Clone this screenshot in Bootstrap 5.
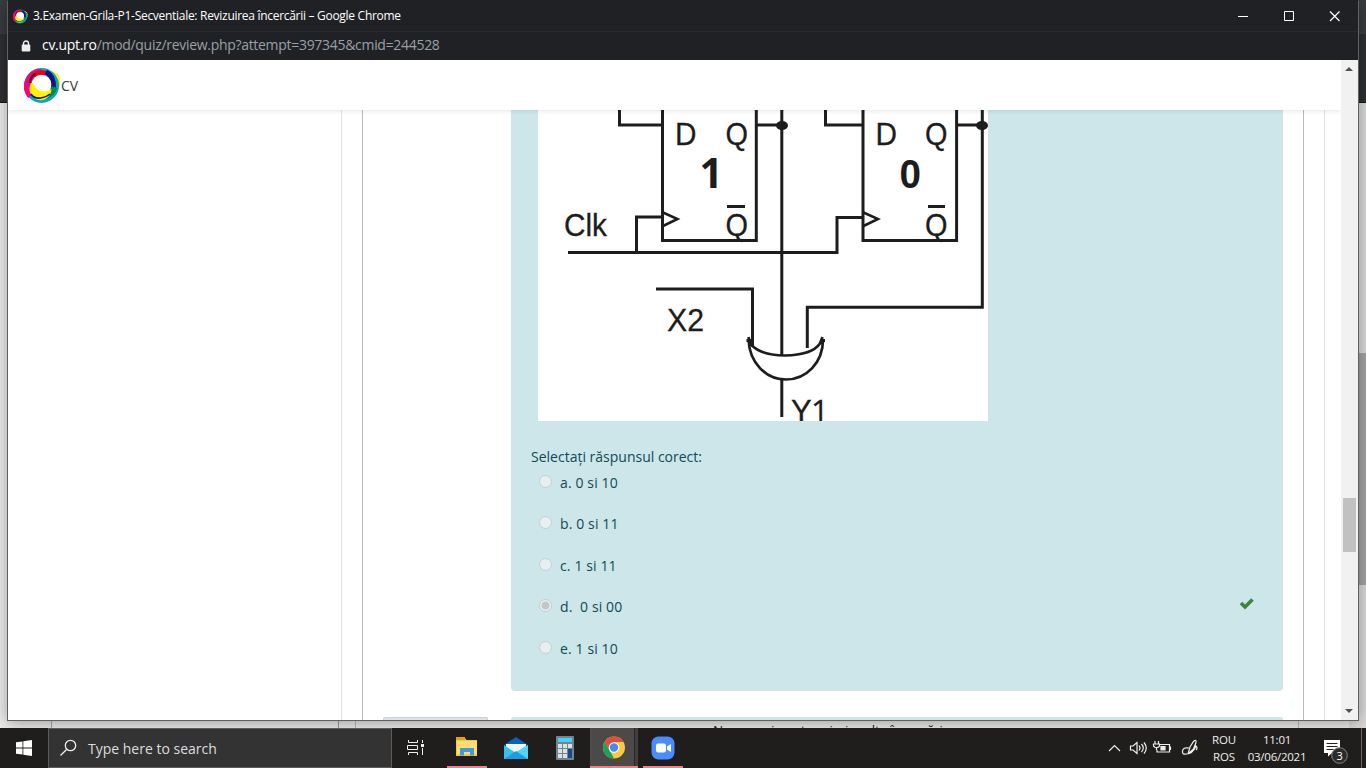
<!DOCTYPE html>
<html lang="ro">
<head>
<meta charset="utf-8">
<meta name="viewport" content="width=device-width, initial-scale=1">
<title>3.Examen-Grila-P1-Secventiale: Revizuirea încercării</title>
<link rel="stylesheet" href="https://cdn.jsdelivr.net/npm/bootstrap@5.3.0/dist/css/bootstrap.min.css">
<style>
html,body{height:768px;overflow:hidden}
body{font-family:"Open Sans","Noto Sans",sans-serif;font-size:14px}
.desktop{width:1366px;height:768px}
.under-bar{height:34px;background:#393d40}
.under-tools{height:69px;background:#2e2f32;border-bottom:1px solid #17181a}
.under-page{background:#eee}
.under-scroll{width:17px;background:#dcdcdc}
.under-thumb{margin-top:250px;height:232px;background:#a5a5a5}
.under-left{width:52px;border-right:1px solid #aaa}
.under-mid{width:287px;border-right:1px solid #999}
.under-gap{width:17px;border-right:1px solid #bbb}
.under-main{width:943px;border-right:1px solid #bbb}
.under-main svg{display:block}
.win{left:7px;top:0;width:1352px;height:721px;border:1px solid #606060;border-top-color:#202124;background:#fff;box-shadow:0 2px 16px rgba(0,0,0,.36)}
.titlebar{height:31px;background:#202124;border-bottom:1px solid #2a2b2e;color:#fff;padding-left:5px}
.title{font-size:12px;letter-spacing:-.29px;margin-left:5px;line-height:30px}
.addr{height:28px;background:#202124;color:#9aa0a6;padding-left:13px}
.url{font-size:14px;line-height:24px;padding-bottom:2px;margin-left:11px;letter-spacing:-.3px}
.site-nav{height:50px;background:#fff;box-shadow:0 2px 4px rgba(0,0,0,.08);padding-left:16px;color:#373a3c;z-index:2}
.side{width:334px;border-right:1px solid #dee2e6}
.region{width:942px;margin-left:20px;border:1px solid #b9b9b9;border-width:0 1px;padding-left:20px}
.tail{margin-left:20px;border-left:1px solid #dee2e6}
.info-spacer,.info-next{width:105px;margin-right:23px}
.next-row{margin-top:26px}
.info-next{height:3px;background:#dee2e6;border:1px solid #cad0d7;border-bottom:0;border-radius:2px 2px 0 0}
.q{width:772px;height:581px;background:#cde6ea;color:#0f4a55;border-radius:0 0 4px 4px;padding-left:20px}
.qnext{width:772px;height:3px;background:#cde6ea;border-radius:3px 3px 0 0}
.circuit{display:block;margin-left:7px}
.prompt{margin-top:25px;height:22px;line-height:22px}
.answers{margin-top:4px}
.ans{height:41.4px;padding-left:8px}
.ans label{line-height:22px;margin-left:8px;white-space:pre;letter-spacing:.12px}
.rad{width:13px;height:13px;margin-top:3px;border:1px solid #c5cdcf;background:#e8eff1;border-radius:50%}
.rad.on{background:radial-gradient(circle,#c3c7c8 0 3.6px,#e8eff1 4.4px)}
.tick{margin-right:28px;margin-top:1px}
.vscroll{width:17px;background:#f1f1f1}
.vthumb{width:13px;height:54px;margin-top:421px;background:#c1c1c1}
.taskbar{height:40px;background:#1f1e1c;color:#eee}
.start{width:48px}
.search{width:344px;height:40px;background:#333;border:1px solid #5c5c5c;color:#ddd;padding-left:10px}
.search span{font-size:14px;margin-left:11px}
.app{height:40px}
.app.run{border-bottom:2px solid #fa7b87}
.tray{font-size:11.5px;line-height:17px;text-align:center;padding-top:3px;white-space:nowrap;letter-spacing:-.1px}
.lang{width:32px;margin-left:3px}
.clock{width:66px;margin-left:4px;letter-spacing:-.25px}
.file-app,.zoom-app{width:40px}
.zoom-app{margin-left:5px}
.chrome-app{width:48px;background:linear-gradient(90deg,#4b4a49 44px,#2a2928 44px 45px,#403f3e 45px)}
</style>
</head>
<body>
<div class="desktop position-relative d-flex flex-column overflow-hidden">
  <div class="under-bar flex-shrink-0"></div>
  <div class="under-tools flex-shrink-0"></div>
  <div class="under-page flex-grow-1 d-flex">
    <div class="under-left"></div><div class="under-mid"></div><div class="under-gap"></div>
    <div class="under-main d-flex flex-column justify-content-end">
      <svg width="942" height="5"><text x="357" y="12" font-size="13.5" fill="#222" textLength="230">Nu se mai poate primi multe încercări</text></svg>
    </div>
    <div class="flex-grow-1"></div>
    <div class="under-scroll"><div class="under-thumb"></div></div>
  </div>

  <div class="win position-absolute d-flex flex-column">
    <div class="titlebar d-flex align-items-center flex-shrink-0">
      <svg width="15" height="15" viewBox="0 0 37 37"><use href="#ring"/></svg>
      <div class="title flex-grow-1">3.Examen-Grila-P1-Secventiale: Revizuirea încercării – Google Chrome</div>
      <svg width="130" height="30" fill="none" stroke="#fff"><path d="M10 15.5h10M56.500 10.500h9v9h-9z"/><path d="M102 10.500l9.500 9.500M111.500 10.500l-9.500 9.500" stroke-width="1.200"/></svg>
    </div>
    <div class="addr d-flex align-items-center flex-shrink-0">
      <svg width="10" height="12"><path d="M2.500 5V3.500a2.500 2.500 0 0 1 5 0V5" fill="none" stroke="#eee" stroke-width="1.400"/><rect x=".7" y="4.500" width="8.600" height="7" rx="1" fill="#eee"/></svg>
      <div class="url"><span class="text-white">cv.upt.ro</span>/mod/quiz/review.php?attempt=397345&amp;cmid=244528</div>
    </div>
    <div class="d-flex flex-grow-1 overflow-hidden">
      <div class="flex-grow-1 d-flex flex-column overflow-hidden">
        <div class="site-nav d-flex align-items-center flex-shrink-0 position-relative">
          <svg width="37" height="37" viewBox="0 0 37 37">
            <g id="ring" fill="none">
              <path d="M26 5q8 1 9 7 1 8-4 13" stroke="#fff200" stroke-width="2"/>
              <circle cx="17.500" cy="18.500" r="13.500" stroke="#06a5c9" stroke-width="8"/>
              <path d="M7 28.500A14 14 0 0 1 17 5.500" stroke="#f0047f" stroke-width="7.500"/>
              <path d="M9 9.500Q14 4.500 22 6.500" stroke="#e8001c" stroke-width="5.500"/>
              <path d="M22 5q8 4 7.500 16" stroke="#17127d" stroke-width="5"/>
              <path d="M30.500 20q-2 7-9 9" stroke="#008c45" stroke-width="6"/>
              <circle cx="17.500" cy="17.500" r="9.800" fill="#fff"/>
              <path d="M7 16a11 11.500 0 1 0 20.500 6q-4 3-9 2.500-7-1-9.500-8.500z" fill="#fff200"/>
              <path d="M7 27q3 5 10 4 5-.5 9-4" stroke="#17127d" stroke-width="1.600"/>
              <path d="M5.500 16Q7 9 11 7" stroke="#4c0710" stroke-width="2"/>
            </g>
          </svg>
          <span>CV</span>
        </div>
        <div class="d-flex flex-grow-1 overflow-hidden">
          <div class="side flex-shrink-0"></div>
          <div class="region flex-shrink-0">
            <div class="d-flex">
              <div class="info-spacer"></div>
              <div class="q">
                <svg class="circuit" width="450" height="311" viewBox="538 110 450 311" font-family="Liberation Sans, sans-serif" font-size="31" fill="#1d1d1d">
                  <rect x="538" y="110" width="450" height="311" fill="#fff"/>
                  <g fill="none" stroke="#1d1d1d" stroke-width="3">
                    <path d="M619.500 110v15H662M756 125h26M825.500 110v15H863M957 125h25"/>
                    <path d="M662.500 108v132.500h93.800V108M863 108v132.500h93.600V108"/>
                    <path d="M568 252.500h269v-35h26M636.500 252v-35H663"/>
                    <path d="M663 212.500l14.500 6.500-14.500 7M863.500 212.500l14.500 6.500-14.500 7" stroke-width="2.500"/>
                    <path d="M727 206.500h18M928 206.500h17"/>
                    <path d="M781.800 110v246M982.300 110v197.200H807.300V348M656 289h96.500v58M781.800 380v37"/>
                    <path d="M748.500 337l1.500 6q8 12 35 12.500 27-.5 35-12l2.500-6.500M748.500 339.500c1 23 17 40 37.500 40s37-17 37-40" stroke-width="2.700"/>
                    <path d="M746.500 340.500h5M820.500 340.500h4.500"/>
                  </g>
                  <ellipse cx="782" cy="125.500" rx="6" ry="4.600"/><ellipse cx="982" cy="125.500" rx="6" ry="4.600"/>
                  <g stroke="#1d1d1d" stroke-width=".3">
                  <text x="675" y="145" textLength="21.500" lengthAdjust="spacingAndGlyphs">D</text><text x="725.500" y="145" textLength="22.500" lengthAdjust="spacingAndGlyphs">Q</text>
                  <text x="875.500" y="145" textLength="21.500" lengthAdjust="spacingAndGlyphs">D</text><text x="925" y="145" textLength="22.500" lengthAdjust="spacingAndGlyphs">Q</text>
                  <text x="725.500" y="235.500" textLength="22.500" lengthAdjust="spacingAndGlyphs">Q</text><text x="925" y="235.500" textLength="22.500" lengthAdjust="spacingAndGlyphs">Q</text>
                  <text x="564" y="235.500" textLength="43" lengthAdjust="spacingAndGlyphs">Clk</text>
                  <text x="667" y="330.500" textLength="37" lengthAdjust="spacingAndGlyphs">X2</text>
                  <text x="791" y="421.500">Y<tspan x="811" font-family="Open Sans">1</tspan></text>
                  </g>
                  <text x="699.500" y="188" font-size="41" font-family="Open Sans" font-weight="700">1</text>
                  <text x="899.500" y="188" font-size="41" font-weight="700" textLength="21.500" lengthAdjust="spacingAndGlyphs">0</text>
                </svg>
                <div class="prompt">Selectați răspunsul corect:</div>
                <div class="answers">
                  <div class="ans d-flex"><i class="rad"></i><label>a. 0 si 10</label></div>
                  <div class="ans d-flex"><i class="rad"></i><label>b. 0 si 11</label></div>
                  <div class="ans d-flex"><i class="rad"></i><label>c. 1 si 11</label></div>
                  <div class="ans d-flex"><i class="rad on"></i><label>d.  0 si 00</label>
                    <svg class="tick ms-auto" width="16" height="13"><path d="M2 6l4 4 7.500-7.500" fill="none" stroke="#3a873c" stroke-width="3.600"/></svg></div>
                  <div class="ans d-flex"><i class="rad"></i><label>e. 1 si 10</label></div>
                </div>
              </div>
            </div>
            <div class="d-flex next-row"><div class="info-next"></div><div class="qnext"></div></div>
          </div>
          <div class="tail flex-grow-1"></div>
        </div>
      </div>
      <div class="vscroll d-flex flex-column align-items-center flex-shrink-0">
        <svg class="mt-1 flex-shrink-0" width="9" height="13"><path d="M0 7l4-4 4 4z" fill="#505050"/></svg>
        <div class="vthumb flex-shrink-0"></div>
        <svg class="mt-auto flex-shrink-0" width="9" height="13"><path d="M0 2l4 4 4-4z" fill="#505050"/></svg>
      </div>
    </div>
  </div>

  <div class="taskbar d-flex flex-shrink-0 position-relative">
    <div class="start d-flex align-items-center justify-content-center"><svg width="16" height="16" fill="#fff"><path d="M0 2.300L6.500 1.400V7.500H0zM7.300 1.200L16 0v7.500H7.300zM0 8.400h6.500v6.200L0 13.700zM7.300 8.400H16V16l-8.700-1.200z"/></svg></div>
    <div class="search d-flex align-items-center"><svg width="18" height="18" fill="none" stroke="#eee" stroke-width="1.300"><circle cx="11.500" cy="6.500" r="5.200"/><path d="M7.800 10.200L1.500 16.500"/></svg><span>Type here to search</span></div>
    <svg class="app" width="55" height="40" fill="none" stroke="#eee"><path d="M16.500 12v2.500h9V12M16.500 27v-2.500h9V27M15.500 17.500h10v4h-10zM30.500 12v3M30.500 20v7"/><path d="M29 17.500h3" stroke-width="3"/></svg>
    <div class="app run file-app d-flex align-items-center justify-content-center">
      <svg width="24" height="22"><path d="M1 2h9l1.500 2H22v16H1z" fill="#f6c64b"/><path d="M1 1h9v3H1z" fill="#e5a00d"/><path d="M2 5h20v13H2z" fill="#ffdc73"/><path d="M5 19.500v-7.500h14v7.500h-4v-3.500H9v3.500z" fill="#3f9bdc"/></svg></div>
    <svg class="app" width="58" height="40"><path d="M17 17l12-8 12 8z" fill="#0b63b5"/><path d="M19 16h20v9l-10 4-10-4z" fill="#f1f4f7"/><path d="M17 17l12 8 12-8v14H17z" fill="#36bff2"/><path d="M17 31l24-14v14z" fill="#51d5fb"/><path d="M17 31l12-8 12 8z" fill="#209ce5"/></svg>
    <svg class="app" width="45" height="40"><rect x="11" y="8" width="18" height="24" rx="1" fill="#76828d"/><path d="M13 10h14v4H13z" fill="#3ed5fa"/><path d="M13 16h4v4h-4zM18 16h4v4h-4zM23 16h4v4h-4zM13 21h4v4h-4zM18 21h4v4h-4zM13 26h4v4h-4zM18 26h4v4h-4z" fill="#dce1e5"/><path d="M23 21h4v9h-4z" fill="#124a8b"/></svg>
    <div class="app run chrome-app d-flex align-items-center">
      <svg width="48" height="38" viewBox="0 0 48 38"><circle cx="24" cy="19.500" r="11" fill="#fbcb3d"/><path d="M14.500 14L24 30.500A11 11 0 0 1 14.500 14z" fill="#1ba35d"/><path d="M14.500 14l5 8 4 8.300q-6 0-9.500-6z" fill="#1ba35d"/><path d="M14.500 14a11 11 0 0 1 19 0H24l-4.500 8z" fill="#dc4f42"/><circle cx="24" cy="19.500" r="5.300" fill="#fff"/><circle cx="24" cy="19.500" r="4.200" fill="#4788f4"/></svg></div>
    <div class="app run zoom-app d-flex align-items-center"><svg width="40" height="38"><rect x="8.500" y="8.500" width="23" height="23" rx="7" fill="#4a8cfc"/><rect x="13" y="15.500" width="10" height="9" rx="2" fill="#fff"/><path d="M24 18.500l4-2.500v8l-4-2.500z" fill="#fff"/></svg></div>
    <svg class="ms-auto" width="97" height="40" fill="none" stroke="#eee" stroke-width="1.200"><path d="M1 23l5.500-5.500L12 23"/><path d="M22.500 18h2.500l4-3.500v11L25 22h-2.500zM31 17.500q2 2.500 0 5M33.500 16q3.500 4 0 8M36 14.500q4.500 5.500 0 11"/><path d="M51 16.500h10.500v7.500H49V22M62.500 18.500v3.500"/><path d="M53 18.500h4v3.500h-4z" fill="#eee"/><path d="M47 13v3M50.500 13v3M45.500 16h6v2l-1.500 1.500h-3L45.500 18zM48.500 20v2"/><path d="M80 26l2-7 3.500-5.500q3-2.500 2.500 1L85.500 21 80 26M81 20q-6-1-6.500 3t4 3q6 0 9.500-8 2 2 0 4"/></svg>
    <div class="tray lang">ROU<br>ROS</div>
    <div class="tray clock">11:01<br>03/06/2021</div>
    <svg width="56" height="40"><path d="M14 12h16v13H22l-4 3.500V25h-4z" fill="#fff"/><path d="M16.500 15.500h11M16.500 18.500h11M16.500 21.500h7" stroke="#222"/><circle cx="29.500" cy="27.500" r="7.800" fill="#2c2b2a" stroke="#868686"/><text x="26.500" y="31.500" font-size="11" fill="#fff">3</text><path d="M51.500 0v40" stroke="#666"/></svg>
  </div>
</div>
<script src="https://cdn.jsdelivr.net/npm/bootstrap@5.3.0/dist/js/bootstrap.bundle.min.js"></script>
</body>
</html>
